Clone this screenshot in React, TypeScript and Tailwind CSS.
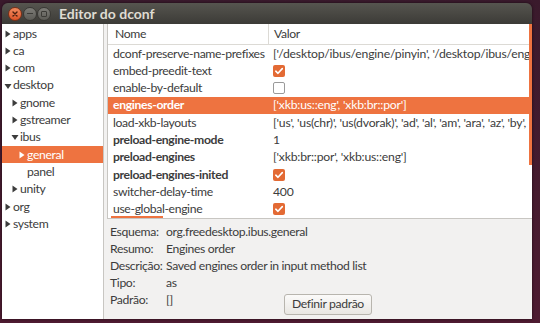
import React from "react";

const ORANGE = "bg-[#ee7340]";

function Tri({ open, color = "#3c3c3c" }: { open?: boolean; color?: string }) {
  return open ? (
    <svg width="8" height="8" viewBox="0 0 8 8" className="shrink-0">
      <path d="M0.5 2 L7.5 2 L4 7 Z" fill={color} />
    </svg>
  ) : (
    <svg width="8" height="8" viewBox="0 0 8 8" className="shrink-0">
      <path d="M1.5 0.5 L6.5 4 L1.5 7.5 Z" fill={color} />
    </svg>
  );
}

type TreeItem = { label: string; indent: number; arrow?: "open" | "closed"; selected?: boolean };
const tree: TreeItem[] = [
  { label: "apps", indent: 0, arrow: "closed" },
  { label: "ca", indent: 0, arrow: "closed" },
  { label: "com", indent: 0, arrow: "closed" },
  { label: "desktop", indent: 0, arrow: "open" },
  { label: "gnome", indent: 1, arrow: "closed" },
  { label: "gstreamer", indent: 1, arrow: "closed" },
  { label: "ibus", indent: 1, arrow: "open" },
  { label: "general", indent: 2, arrow: "closed", selected: true },
  { label: "panel", indent: 2 },
  { label: "unity", indent: 1, arrow: "closed" },
  { label: "org", indent: 0, arrow: "closed" },
  { label: "system", indent: 0, arrow: "closed" },
];

type Row = { name: string; value: string | boolean; bold?: boolean; selected?: boolean };
const rows: Row[] = [
  { name: "dconf-preserve-name-prefixes", value: "['/desktop/ibus/engine/pinyin', '/desktop/ibus/engine/hangul']" },
  { name: "embed-preedit-text", value: true },
  { name: "enable-by-default", value: false },
  { name: "engines-order", value: "['xkb:us::eng', 'xkb:br::por']", bold: true, selected: true },
  { name: "load-xkb-layouts", value: "['us', 'us(chr)', 'us(dvorak)', 'ad', 'al', 'am', 'ara', 'az', 'by', 'be']" },
  { name: "preload-engine-mode", value: "1", bold: true },
  { name: "preload-engines", value: "['xkb:br::por', 'xkb:us::eng']", bold: true },
  { name: "preload-engines-inited", value: true, bold: true },
  { name: "switcher-delay-time", value: "400" },
  { name: "use-global-engine", value: true },
];

function Check({ checked }: { checked: boolean }) {
  if (!checked)
    return <div className="w-[12px] h-[12px] rounded-[2px] border border-[#9a9a9a] bg-white" />;
  return (
    <div className="w-[12px] h-[12px] rounded-[2px] bg-[#e36a34] flex items-center justify-center">
      <svg width="10" height="10" viewBox="0 0 10 10">
        <path d="M1.8 5.2 L4 7.3 L8.3 2.6" stroke="white" strokeWidth="1.6" fill="none" strokeLinecap="round" strokeLinejoin="round" />
      </svg>
    </div>
  );
}

export default function App() {
  return (
    <div
      className="w-[540px] h-[323px] overflow-hidden bg-gradient-to-b from-[#3a1a2c] to-[#4e1b31] pt-[3px] pl-[2px] pr-[7px] pb-[4px]"
      style={{ fontFamily: 'Lato, "Open Sans", sans-serif' }}
    >
      <div className="w-[530px] h-[316px] flex flex-col rounded-t-[6px] overflow-hidden shadow-[0_0_3px_rgba(0,0,0,0.6)]">
        {/* Title bar */}
        <div className="h-[21px] shrink-0 bg-gradient-to-b from-[#56554f] to-[#3c3b37] flex items-center pl-[6px]">
          <div className="w-[14px] h-[14px] rounded-full bg-gradient-to-b from-[#f08a5e] to-[#dc5427] flex items-center justify-center border border-[#7a3018]">
            <svg width="8" height="8" viewBox="0 0 8 8">
              <path d="M2 2 L6 6 M6 2 L2 6" stroke="#4a2010" strokeWidth="1.4" strokeLinecap="round" />
            </svg>
          </div>
          <div className="ml-[1px] w-[14px] h-[14px] rounded-full bg-gradient-to-b from-[#7e7d78] to-[#5c5b56] border border-[#3a3935] flex items-center justify-center">
            <div className="w-[6px] h-[1.5px] bg-[#3c3b37]" />
          </div>
          <div className="w-[14px] h-[14px] rounded-full bg-gradient-to-b from-[#7e7d78] to-[#5c5b56] border border-[#3a3935] flex items-center justify-center">
            <div className="w-[6px] h-[6px] border border-[#3c3b37] rounded-[1px]" />
          </div>
          <span className="ml-[8px] text-[14px] font-bold text-[#dfdbd2] leading-none">Editor do dconf</span>
        </div>
        {/* Body */}
        <div className="flex-1 flex bg-[#f2f1f0] text-[#3c3c3c] text-[12.2px] tracking-[-0.35px] leading-none">
          {/* Tree */}
          <div className="w-[102px] shrink-0 bg-white border-r border-[#c8c6c2] pt-[1px]">
            {tree.map((t) => (
              <div
                key={t.label}
                className={`h-[17.3px] flex items-center ${t.selected ? ORANGE + " text-white" : ""}`}
                style={{ paddingLeft: 2 + t.indent * 7 }}
              >
                <div className="w-[8px] flex items-center">
                  {t.arrow ? <Tri open={t.arrow === "open"} color={t.selected ? "#ffffff" : "#3c3c3c"} /> : null}
                </div>
                <span className="ml-[1px]">{t.label}</span>
              </div>
            ))}
          </div>
          {/* Right side */}
          <div className="flex-1 flex flex-col min-w-0 pl-[3px]">
            <div className="h-[195px] shrink-0 bg-white border-l border-b border-[#c8c6c2] relative overflow-hidden">
              <div className="h-[21px] flex items-center border-b border-[#dcdad5]">
                <div className="w-[161px] pl-[7px] h-full flex items-center border-r border-[#dcdad5]">Nome</div>
                <div className="pl-[5px]">Valor</div>
              </div>
              {rows.map((r) => (
                <div
                  key={r.name}
                  className={`h-[17.3px] flex items-center whitespace-nowrap ${r.selected ? ORANGE + " text-white" : ""}`}
                >
                  <div className={`w-[161px] shrink-0 pl-[5px] ${r.bold ? "font-bold" : ""}`}>{r.name}</div>
                  <div className="pl-[4px] tracking-[-0.2px]">
                    {typeof r.value === "boolean" ? <Check checked={r.value} /> : r.value}
                  </div>
                </div>
              ))}
              {/* overlay scrollbars */}
              <div className="absolute right-0 top-0 w-[3px] h-[141px] bg-[#ee7340]" />
              <div className="absolute left-[3px] bottom-[0px] w-[52px] h-[2px] bg-[#ee7340]" />
            </div>
            {/* Info */}
            <div className="pl-[3px] pt-[5px] leading-none">
              {[
                ["Esquema:", "org.freedesktop.ibus.general"],
                ["Resumo:", "Engines order"],
                ["Descrição:", "Saved engines order in input method list"],
                ["Tipo:", "as"],
              ].map(([k, v]) => (
                <div key={k} className="h-[17px] flex items-center">
                  <div className="w-[56px]">{k}</div>
                  <div>{v}</div>
                </div>
              ))}
              <div className="h-[17px] flex items-center">
                <div className="w-[56px]">Padrão:</div>
                <div className="w-[118px]">[]</div>
                <button className="mt-[8px] h-[21px] px-[7px] rounded-[3px] border border-[#b8b5ae] bg-gradient-to-b from-[#fbfaf9] to-[#e9e7e3] text-[12.2px] tracking-[-0.35px] text-[#3c3c3c]">
                  Definir padrão
                </button>
              </div>
            </div>
          </div>
        </div>
      </div>
    </div>
  );
}
